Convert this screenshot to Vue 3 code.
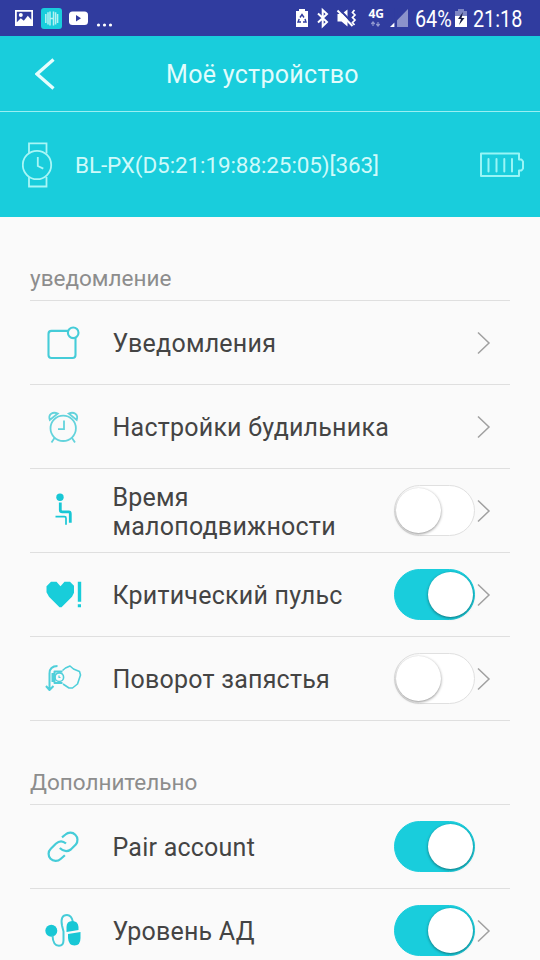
<script setup>
import { ref } from 'vue'

const sections = ref([
  {
    title: 'уведомление',
    cls: 'first',
    rows: [
      { icon: 'note', label: 'Уведомления', arrow: true },
      { icon: 'alarm', label: 'Настройки будильника', arrow: true },
      { icon: 'sit', label: 'Время малоподвижности', arrow: true, toggle: true, on: false },
      { icon: 'heart', label: 'Критический пульс', arrow: true, toggle: true, on: true },
      { icon: 'wrist', label: 'Поворот запястья', arrow: true, toggle: true, on: false }
    ]
  },
  {
    title: 'Дополнительно',
    cls: 'second',
    rows: [
      { icon: 'link', label: 'Pair account', toggle: true, on: true },
      { icon: 'pressure', label: 'Уровень АД', arrow: true, toggle: true, on: true }
    ]
  }
])
</script>

<template>
  <div class="screen">
    <div class="status">
      <svg width="120" height="36" viewBox="0 0 120 36">
        <path fill="#fff" fill-rule="evenodd" d="M15 10h18v16h-18zM16.800 11.800v10.500l4-4 3 2.500 4-5 3.500 4v-8z" />
        <circle cx="20.800" cy="15" r="2" fill="#fff" />
        <rect x="41" y="8" width="21" height="21" rx="3" fill="#19cddc" />
        <g fill="none" stroke="#b4f2f2" stroke-width="1.500">
          <path d="M45.800 14v9M48 12.300v12.300M50 11.500v14M53.500 11.500v14M55.600 12.300v12.300M57.600 14v9M50 18.500h3.500" />
        </g>
        <rect x="69" y="11.500" width="19" height="13.500" rx="3.500" fill="#fff" />
        <path d="M76 15v6.500l5-3.200z" fill="#303c9f" />
        <g fill="#fff"><circle cx="98.500" cy="25" r="1.600" /><circle cx="104.500" cy="25" r="1.600" /><circle cx="110.500" cy="25" r="1.600" /></g>
      </svg>
      <div class="status-right">
        <svg width="132" height="36" viewBox="280 0 132 36">
          <path fill="#fff" d="M299 9h6v2h3v16h-12V11h3z" />
          <path d="M300 17.500l2-3 2 3M305 19l1 3h-3M301 22h-3l1.200-3" fill="none" stroke="#303c9f" stroke-width="1.400" />
          <path d="M318 13.500l9 8.500-4.300 4.200V10l4.300 4-9 8.500" fill="none" stroke="#fff" stroke-width="2" />
          <path d="M337.500 14h4l6-4.500v17l-6-5h-4z" fill="#fff" />
          <path d="M339.500 9.500l14 14.500" stroke="#303c9f" stroke-width="2" />
          <path d="M337.500 10.500l15 15.500" stroke="#fff" stroke-width="2" />
          <path d="M354.500 10l-2 2.500 2.500 2.500-2.500 2.500 2.500 2.500-2.500 2.500 2 2.500" fill="none" stroke="#fff" stroke-width="1.700" />
          <text x="368.500" y="18" class="net">4G</text>
          <path d="M373 26v-4M371.300 24l1.700-2 1.700 2M378 22v4M376.300 24l1.700 2 1.700-2" fill="none" stroke="#929ad0" stroke-width="1.200" />
          <path d="M408 9v18h-17.500z" fill="#8b93cb" />
          <path d="M394.500 22.500v4.500h-4.500z" fill="#fff" />
          <path d="M395.800 8v19" stroke="#303c9f" stroke-width="2.500" />
        </svg>
        <span class="pct">64%</span>
        <svg width="12" height="36" viewBox="455 0 12 36">
          <path fill="#7e87c4" d="M458 9h6v2h3v7h-12v-7h3z" />
          <path fill="#fff" d="M455 16h12v11h-12z" />
          <path fill="#151b45" d="M463 12l-5 7h3l-2 6 5.500-7h-3z" />
        </svg>
        <span class="time">21:18</span>
      </div>
    </div>

    <header class="bar">
      <svg class="back" width="20" height="32" viewBox="0 0 20 32"><path d="M18.500 1.500L2 16l16.500 14.500" fill="none" stroke="#e6fdfd" stroke-width="3.300" /></svg>
      <h1>Моё устройство</h1>
    </header>

    <div class="device">
      <svg class="watch" width="32" height="46" viewBox="0 0 32 46" fill="none" stroke="#a8f6f6" stroke-width="1.800">
        <circle cx="15" cy="23" r="14.200" />
        <path d="M7 11.500V1.300h17.500V11.500M7 35V44.500h17.500V35M15.800 15v9l5.500 2.600" />
      </svg>
      <span class="name">BL-PX(D5:21:19:88:25:05)[363]</span>
      <svg class="power" width="46" height="26" viewBox="0 0 46 26" fill="none" stroke="#98f5f6">
        <path stroke-width="2" stroke-linejoin="round" d="M2 1.500h38v6h2.500l1.500 2v7l-1.500 2h-2.500v5.500h-38z" />
        <path stroke-width="2" stroke-linecap="round" d="M9.500 7v12.500M17.500 7v12.500M25.300 7v12.500M33 7v12.500" />
      </svg>
    </div>

    <section v-for="s in sections" :key="s.title" :class="s.cls">
      <h2>{{ s.title }}</h2>
      <div v-for="r in s.rows" :key="r.label" class="row">
        <svg class="icon" width="48" height="83" viewBox="0 0 48 83" fill="none" stroke="#45ccd8" stroke-width="1.700">
          <g v-if="r.icon === 'note'" stroke-width="2.100">
            <path d="M28 29.900H11.500a3 3 0 0 0-3 3V54a3 3 0 0 0 3 3H32.500a3 3 0 0 0 3-3V37" />
            <circle cx="33.200" cy="31.800" r="5.300" />
          </g>
          <g v-else-if="r.icon === 'alarm'" stroke="#63d3dc" stroke-width="1.800">
            <circle cx="23.200" cy="43.300" r="12.700" />
            <path d="M24 35.500v8.700h-6M14.500 53l-3 4.500M32 53l3 4.500" />
            <path d="M9.800 35c-2-6 3-8.500 8-6.500zM36.700 35c2-6-3-8.500-8-6.500z" />
          </g>
          <g v-else-if="r.icon === 'sit'" stroke="#18c7d5">
            <circle cx="20" cy="28.300" r="3.700" fill="#18c7d5" stroke="none" />
            <path stroke-width="2.800" d="M20.300 33.500v7.500q0 1.800 2 1.800h6.500q1.500 0 1.500 2v9" />
            <path stroke-width="1.700" d="M15.500 47.700h9q1.500 0 1.500 1.500v6.500" />
          </g>
          <g v-else-if="r.icon === 'heart'" stroke="none" fill="#18cdda">
            <path d="M11 28.800h5.500l4 4.500 4-4.500H30l4 4v7l-2 4-10.500 10.500h-2L9 43.800l-2.500-4.500v-6z" />
            <path d="M37.800 28.800h3.400v20h-3.400zM37.800 51.300h3.200v3h-3.200z" />
          </g>
          <g v-else-if="r.icon === 'wrist'" stroke="#4fcfda" stroke-width="1.600" stroke-linejoin="round">
            <path d="M17.500 29q-8 0-8 7.500V52M6 49l3.500 4 4-4" stroke-width="2" />
            <path d="M22.500 33.500l3-2.500 4.500-2 3.500 3 6 2.500 1 3.500-3 9-5 4h-3.500l-6-4" />
            <path d="M22.500 34.500h-8v11.500h8M12.500 36v9" stroke-width="2" />
            <circle cx="19.300" cy="40.200" r="4.300" /><path d="M19 38.500v2h1.500" stroke-width="1.200" />
          </g>
          <g v-else-if="r.icon === 'link'" stroke-width="2.200">
            <path d="M22 32.300l3.500-2.800a7.200 7.200 0 0 1 10.300 10l-5 5q-5.500 4-11-1.500" />
            <path d="M26 38.500q-5-4.500-10.200.2l-5 5a7.100 7.100 0 0 0 9.800 10.300l4.300-3.800" />
          </g>
          <g v-else stroke-width="2">
            <circle cx="11.300" cy="41.800" r="6" fill="#18c7d5" stroke="none" />
            <path d="M12.500 46.500q.5 10.300 6.500 10.300 4.500 0 4.500-5.500V42.500l-1.500-6q-2-10.500 5-10.500 4.500 0 6 7" />
            <path fill="#18c7d5" stroke="none" d="M26.500 43v-5q0-6 5.800-6t6.200 6v3zM28 45l12.500-2v6q0 7.500-6 7.500t-6.500-7.500z" />
          </g>
        </svg>
        <span class="label">{{ r.label }}</span>
        <button v-if="r.toggle" class="toggle" :class="{ on: r.on }" @click="r.on = !r.on"><i></i></button>
        <svg v-if="r.arrow" class="arrow" width="14" height="24" viewBox="0 0 14 24"><path d="M1 1.500l11 10.500-11 10.500" fill="none" stroke="#a0a0a0" stroke-width="1.500" /></svg>
      </div>
    </section>
  </div>
</template>

<style>
body { margin: 0; overflow: hidden; }
</style>

<style scoped>
.screen { width: 540px; height: 960px; overflow: hidden; background: #fafafa; font-family: Roboto, "Noto Sans", sans-serif; }
.screen * { box-sizing: border-box; }
svg { display: block; flex: none; }
.status { display: flex; justify-content: space-between; height: 36px; background: #303c9f; color: #fff; }
.status-right { display: flex; width: 260px; font-size: 23px; line-height: 39px; white-space: nowrap; }
.net { font: 700 12px "Open Sans", sans-serif; fill: #fff; }
.pct, .time { transform-origin: 0 50%; transform: scaleX(.86); }
.pct { width: 40px; margin-left: 3px; }
.time { margin-left: 6px; }
.bar { display: flex; align-items: center; height: 76px; padding-left: 35px; background: #19cddc; border-bottom: 1px solid #9aeff2; color: #e2fcfc; }
h1 { margin: 2px 0 0 111px; font-size: 25px; line-height: 30px; font-weight: 400; letter-spacing: .3px; white-space: nowrap; }
.device { display: flex; align-items: center; height: 105px; padding: 0 15px 0 22px; background: #19cddc; color: #cffafa; }
.name { flex: 1; margin-left: 21px; padding-top: 1px; font-size: 22.500px; line-height: 30px; letter-spacing: -.1px; white-space: nowrap; }
section { padding: 0 30px; }
h2 { margin: 0; height: 84px; padding-top: 46px; border-bottom: 1px solid #dfdfdf; color: #8d8d8d; font-size: 22.500px; line-height: 30px; font-weight: 400; }
.row { display: flex; align-items: center; height: 84px; padding: 0 19px 0 10px; border-bottom: 1px solid #dfdfdf; }
.label { flex: 1; margin-left: 24.500px; color: #444; font-size: 25px; line-height: 29px; letter-spacing: .23px; padding-top: 2px; }
.toggle { flex: none; width: 81px; height: 51px; margin: 0 2px 0 0; padding: 2px 1px; border: 1px solid #e0e0e0; border-radius: 26px; background: #fff; }
.toggle i { display: block; width: 45px; height: 45px; border-radius: 50%; background: #fff; box-shadow: 0 1px 3px rgba(0,0,0,.45); }
.toggle.on { background: #19cddc; border-color: #19cddc; }
.toggle.on i { margin-left: 32px; }
.toggle:last-child { margin-right: 16px; }
</style>
